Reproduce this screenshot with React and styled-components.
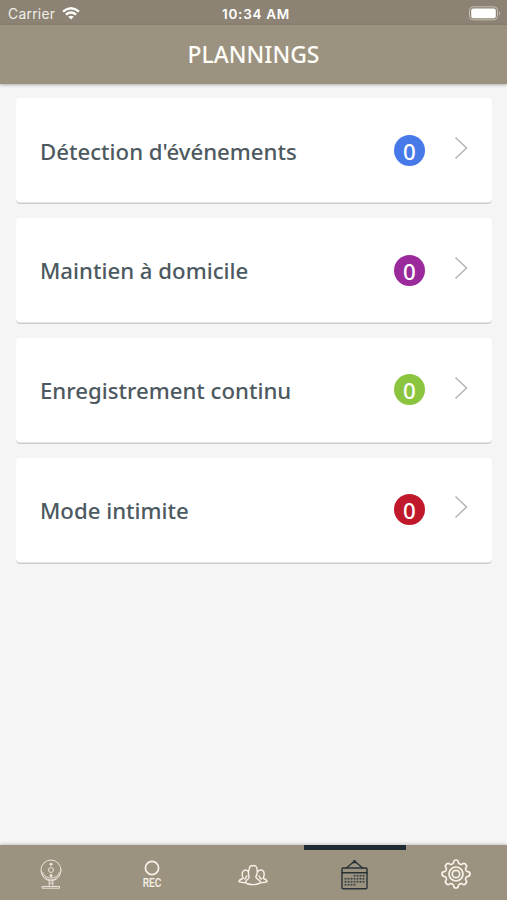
import React from "react";
import styled, { createGlobalStyle } from "styled-components";

const GlobalStyle = createGlobalStyle`
    * {
        box-sizing: border-box;
    }
    body {
        margin: 0;
        background: #f5f5f5;
        font-family: "Noto Sans", "Open Sans", sans-serif;
    }
`;

const Screen = styled.div`
    display: flex;
    flex-direction: column;
    height: 900px;
    background: #f5f5f5;
`;

const StatusBar = styled.div`
    display: grid;
    grid-template-columns: 1fr auto 1fr;
    align-items: center;
    height: 25px;
    padding: 2px 6px 0 8px;
    background: #8c8374;
    color: #fff;
    font-family: Inter, sans-serif;
    font-size: 13.8px;
    line-height: 20px;
`;

const Carrier = styled.div`
    display: flex;
    align-items: center;
    gap: 7px;
    color: #f1eee8;
    letter-spacing: 0.3px;
`;

const Clock = styled.div`
    font-weight: 600;
    font-size: 13.5px;
    letter-spacing: 0.7px;
    margin-left: 3px;
`;

const Battery = styled.svg`
    justify-self: end;
`;

const Header = styled.header`
    display: flex;
    align-items: center;
    justify-content: center;
    height: 59px;
    background: #9b9280;
    box-shadow: 0 1px 3px rgba(0, 0, 0, 0.3);
    h1 {
        margin: 0;
        color: #fffdf8;
        font-size: 22.9px;
        font-weight: 500;
        line-height: 30px;
    }
`;

const List = styled.main`
    display: flex;
    flex: 1;
    flex-direction: column;
    gap: 14px;
    padding: 14.4px 15px 0 16px;
`;

const Card = styled.div`
    display: flex;
    align-items: center;
    height: 105.8px;
    padding: 0 24px;
    background: #fff;
    border-radius: 4px;
    box-shadow: inset 0 -1.5px 0 #cbcdce;
`;

const Label = styled.span`
    flex: 1;
    margin-bottom: -0.6px;
    color: #4d5960;
    font-size: 22.2px;
    font-weight: 500;
    line-height: 30px;
`;

const Badge = styled.span`
    width: 31px;
    height: 31px;
    margin: 0 29px 1.8px 0;
    border-radius: 50%;
    background: ${(props) => props.$color};
    color: #fff;
    font-size: 22.3px;
    font-weight: 500;
    line-height: 33px;
    text-align: center;
`;

const Chevron = styled.svg`
    margin-bottom: 6.6px;
`;

const TabBar = styled.nav`
    display: grid;
    grid-template-columns: repeat(5, 1fr);
    height: 55px;
    background: #9b9280;
    box-shadow: 0 -1px 3px rgba(0, 0, 0, 0.2);
`;

const Tab = styled.div`
    display: flex;
    flex-direction: column;
    align-items: center;
    padding-top: ${(props) => props.$offset || 9}px;
    border-top: 5px solid ${(props) => (props.$active ? "#1d2d33" : "transparent")};
    color: ${(props) => (props.$active ? "#283338" : "#f8f3e8")};
    svg {
        display: block;
        fill: none;
        stroke: currentColor;
        stroke-linejoin: round;
        stroke-linecap: round;
    }
`;

const RecLabel = styled.span`
    margin-top: -1px;
    font-family: Roboto, sans-serif;
    font-size: 13px;
    font-weight: 500;
    line-height: 15px;
    transform: scaleX(0.78);
`;

const plannings = [
    { label: "Détection d'événements", color: "#4779e8" },
    { label: "Maintien à domicile", color: "#9b2a9c" },
    { label: "Enregistrement continu", color: "#8bc53f" },
    { label: "Mode intimite", color: "#c0192b" },
];

const WifiIcon = () => (
    <svg width="18" height="13" viewBox="0 0 18 13" fill="none" stroke="#fff" strokeWidth="2.3">
        <path d="M1 4.6Q9-2.2 17 4.6M3.9 7.7Q9 3.4 14.1 7.7" />
        <path d="M6.2 9.8Q9 7.5 11.8 9.8L9 12.5Z" fill="#fff" stroke="none" />
    </svg>
);

const CameraIcon = () => (
    <svg width="22" height="31" viewBox="0 0 22 31" strokeWidth="1" opacity="0.85">
        <circle cx="11" cy="11" r="10" />
        <path d="M1.2 12.5C2 18 6 21.8 11 21.8S20 18 20.8 12.5" />
        <path d="M2.8 13.5C4.2 17.3 7 18.9 11 18.9S17.8 17.3 19.2 13.5" />
        <circle cx="11" cy="11" r="2.5" />
        <circle cx="11" cy="5.2" r="1.1" fill="currentColor" />
        <circle cx="11" cy="16.6" r="1.1" fill="currentColor" />
        <path d="M9.2 22V26.5M12.8 22V26.5M9.2 24.2H12.8M2.5 29.2H19.5V27.4H2.5Z" />
    </svg>
);

const RecIcon = () => (
    <svg width="16" height="16" viewBox="0 0 16 16" strokeWidth="1.7">
        <circle cx="8" cy="8" r="6.6" />
    </svg>
);

const PeopleIcon = () => (
    <svg width="30" height="22" viewBox="0 0 30 22" strokeWidth="1.4">
        <path d="M11 12.5C10 9.5 10.5 7 11.2 5.2C11.4 2.8 12.5 1.4 14.2 1.8C16.8 .7 19.4 2.7 19 5.5C19.5 8.5 19 11 17.9 12.5C17.7 15 20.4 14.7 22 17.2C23.5 19.5 19 20.6 15 20.6S6.5 19.5 8 17.2C9.4 14.7 11.4 15.3 11 12.5Z" />
        <path d="M10.2 7.5C7.4 4.6 3.9 6.6 4.2 11C4.3 12.8 5.4 13.2 5 14.4C2.4 15.2 1.2 15.5 1 17.7C2.6 18.6 4.2 18.7 7.4 18.7M6.5 15C8 14.8 8 13.2 8.8 11.8" />
        <path d="M19.8 7.5C22.3 4.6 26.3 6 26.2 10.4C26.2 12.7 25 13 25.2 14.3C27.8 15.3 29 15.6 29.1 17.7C27.6 18.6 25.8 18.7 22.6 18.7M23.5 15C22 14.8 21.7 13.2 21 11.8" />
    </svg>
);

const dotRows = [
    { y: 16.8, xs: [13.5, 16.5, 19.5, 22.5] },
    { y: 19.8, xs: [4.5, 7.5, 10.5, 13.5, 16.5, 19.5, 22.5] },
    { y: 22.8, xs: [4.5, 7.5, 10.5, 13.5, 16.5, 19.5, 22.5] },
    { y: 25.8, xs: [4.5, 7.5, 10.5, 13.5] },
];

const CalendarIcon = () => (
    <svg width="27" height="31" viewBox="0 0 27 31" strokeWidth="1.4">
        <rect x="1" y="9" width="25" height="20.8" rx="1" />
        <path d="M1 13.7H26M5.5 9L13.5 2L21.5 9" />
        <path d="M11 4.2L13.5 1.5L16 4.2Z" fill="currentColor" stroke="none" />
        <circle cx="13.5" cy="2.2" r="1.3" fill="currentColor" stroke="none" />
        {dotRows.map((row) =>
            row.xs.map((x) => (
                <rect
                    key={`${x}-${row.y}`}
                    x={x - 0.9}
                    y={row.y - 0.9}
                    width="1.8"
                    height="1.7"
                    fill="currentColor"
                    stroke="none"
                    opacity="0.85"
                />
            ))
        )}
    </svg>
);

const GearIcon = () => (
    <svg width="30" height="30" viewBox="0 0 30 30" strokeWidth="1.7">
        <path d="M11.8 4.8Q12.5 4.4 12.6 3.2Q12.9 1 15 1T17.4 3.2Q17.5 4.4 18.2 4.8L19.8 5.4Q20.6 5.7 21.5 4.9Q23.1 3.7 24.7 5.3T25.1 8.5Q24.3 9.4 24.6 10.2L25.2 11.8Q25.6 12.5 26.8 12.6Q29 12.9 29 15T26.8 17.4Q25.6 17.5 25.2 18.2L24.6 19.8Q24.3 20.6 25.1 21.5Q26.3 23.1 24.7 24.7T21.5 25.1Q20.6 24.3 19.8 24.6L18.2 25.2Q17.5 25.6 17.4 26.8Q17.1 29 15 29T12.6 26.8Q12.5 25.6 11.8 25.2L10.2 24.6Q9.4 24.3 8.5 25.1Q6.9 26.3 5.3 24.7T4.9 21.5Q5.7 20.6 5.4 19.8L4.8 18.2Q4.4 17.5 3.2 17.4Q1 17.1 1 15T3.2 12.6Q4.4 12.5 4.8 11.8L5.4 10.2Q5.7 9.4 4.9 8.5Q3.7 6.9 5.3 5.3T8.5 4.9Q9.4 5.7 10.2 5.4Z" />
        <circle cx="15" cy="15" r="7" />
        <circle cx="15" cy="15" r="3.7" />
    </svg>
);

const App = () => {
    return (
        <Screen>
            <GlobalStyle />
            <StatusBar>
                <Carrier>
                    Carrier
                    <WifiIcon />
                </Carrier>
                <Clock>10:34 AM</Clock>
                <Battery width="32" height="15" viewBox="0 0 32 15">
                    <rect x=".5" y=".8" width="28" height="13" rx="3.5" fill="none" stroke="#c5beb3" />
                    <rect x="2.2" y="2.4" width="24.6" height="9.8" rx="2" fill="#fff" />
                    <path d="M30 5Q32 7.3 30 9.6Z" fill="#c5beb3" />
                </Battery>
            </StatusBar>
            <Header>
                <h1>PLANNINGS</h1>
            </Header>
            <List>
                {plannings.map((item) => (
                    <Card key={item.label}>
                        <Label>{item.label}</Label>
                        <Badge $color={item.color}>0</Badge>
                        <Chevron width="14" height="24" viewBox="0 0 14 24">
                            <path d="M1.5 1.5L12.5 12L1.5 22.5" fill="none" stroke="#b5b5b5" strokeWidth="1.5" />
                        </Chevron>
                    </Card>
                ))}
            </List>
            <TabBar>
                <Tab>
                    <CameraIcon />
                </Tab>
                <Tab $offset={10}>
                    <RecIcon />
                    <RecLabel>REC</RecLabel>
                </Tab>
                <Tab $offset={14}>
                    <PeopleIcon />
                </Tab>
                <Tab $active>
                    <CalendarIcon />
                </Tab>
                <Tab>
                    <GearIcon />
                </Tab>
            </TabBar>
        </Screen>
    );
};

export default App;
